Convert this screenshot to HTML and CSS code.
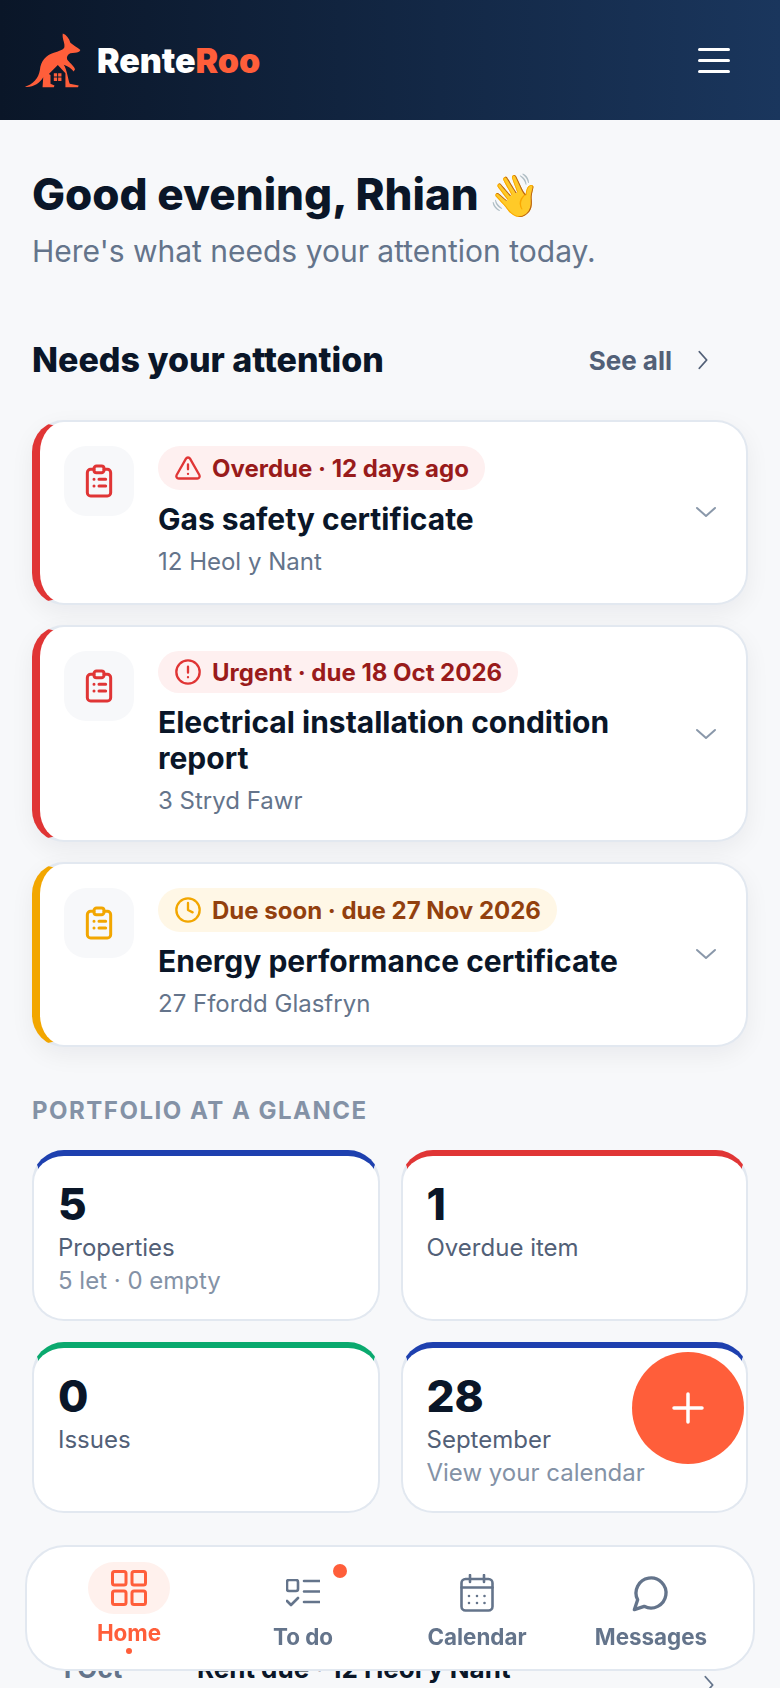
FILE: index.html
```html
<!DOCTYPE html>
<html lang="en">
<head>
    <meta charset="UTF-8">
    <meta name="viewport" content="width=device-width, initial-scale=1.0">
    <title>RenteRoo</title>
    <link rel="stylesheet" href="styles.css">
</head>
<body>

    <header class="topbar">
        <div class="brand">
            <svg class="brand-logo" viewBox="40 36 172 168" fill="#ff5e3a">
                <path d="M157 40C168 44 176 54 180 68L188 74C196 80 205 84 210 90C208 96 202 98 194 98L180 100C172 104 168 110 170 118C176 128 188 134 194 148L190 155C184 146 172 138 160 134C170 150 172 175 178 192L205 197L203 202L165 202L165 160L142 135L115 162L120 165L120 192L132 197L130 202L96 202L98 172C88 190 66 204 42 201C66 194 84 176 88 150C90 122 108 104 130 98C144 94 156 90 161 84C166 72 154 56 157 40Z"/>
                <path d="M130 160h10v10h-10zM143 160h10v10h-10zM130 173h10v10h-10zM143 173h10v10h-10z"/>
            </svg>
            <span class="brand-name">Rente<span class="brand-accent">Roo</span></span>
        </div>
        <div class="hamburger"><span></span><span></span><span></span></div>
    </header>

    <main class="page">
        <section class="greeting">
            <h1>Good evening, Rhian <span class="wave">👋</span></h1>
            <p>Here's what needs your attention today.</p>
        </section>

        <div class="section-head">
            <h2>Needs your attention</h2>
            <a class="see-all">See all
                <svg class="icon" width="24" height="24" viewBox="0 0 24 24"><path d="M8 3l8 9-8 9"/></svg>
            </a>
        </div>

        <div class="task-list">
            <article class="task task-red">
                <div class="task-icon">
                    <svg class="icon" width="40" height="40" viewBox="0 0 24 24"><path d="M9 5H7a2 2 0 0 0-2 2v12a2 2 0 0 0 2 2h10a2 2 0 0 0 2-2V7a2 2 0 0 0-2-2h-2"/><rect x="9" y="3" width="6" height="4" rx="1.5"/><path d="M9 11h.01M9 15h.01M12 11h4M12 15h4"/></svg>
                </div>
                <div class="task-body">
                    <span class="pill">
                        <svg class="icon" width="28" height="28" viewBox="0 0 24 24"><path d="M21.73 18l-8-14a2 2 0 0 0-3.46 0l-8 14A2 2 0 0 0 4 21h16a2 2 0 0 0 1.73-3Z"/><path d="M12 9v4M12 17h.01"/></svg>
                        Overdue · 12 days ago
                    </span>
                    <h3>Gas safety certificate</h3>
                    <p>12 Heol y Nant</p>
                </div>
                <svg class="icon task-chevron" width="24" height="24" viewBox="0 0 24 24"><path d="M3 8l9 8 9-8"/></svg>
            </article>

            <article class="task task-red task-long">
                <div class="task-icon">
                    <svg class="icon" width="40" height="40" viewBox="0 0 24 24"><path d="M9 5H7a2 2 0 0 0-2 2v12a2 2 0 0 0 2 2h10a2 2 0 0 0 2-2V7a2 2 0 0 0-2-2h-2"/><rect x="9" y="3" width="6" height="4" rx="1.5"/><path d="M9 11h.01M9 15h.01M12 11h4M12 15h4"/></svg>
                </div>
                <div class="task-body">
                    <span class="pill">
                        <svg class="icon" width="28" height="28" viewBox="0 0 24 24"><circle cx="12" cy="12" r="10"/><path d="M12 7.5v5M12 16.5h.01"/></svg>
                        Urgent · due 18 Oct 2026
                    </span>
                    <h3>Electrical installation condition report</h3>
                    <p>3 Stryd Fawr</p>
                </div>
                <svg class="icon task-chevron" width="24" height="24" viewBox="0 0 24 24"><path d="M3 8l9 8 9-8"/></svg>
            </article>

            <article class="task task-amber">
                <div class="task-icon">
                    <svg class="icon" width="40" height="40" viewBox="0 0 24 24"><path d="M9 5H7a2 2 0 0 0-2 2v12a2 2 0 0 0 2 2h10a2 2 0 0 0 2-2V7a2 2 0 0 0-2-2h-2"/><rect x="9" y="3" width="6" height="4" rx="1.5"/><path d="M9 11h.01M9 15h.01M12 11h4M12 15h4"/></svg>
                </div>
                <div class="task-body">
                    <span class="pill">
                        <svg class="icon" width="28" height="28" viewBox="0 0 24 24"><circle cx="12" cy="12" r="10"/><path d="M12 6v6l4 2"/></svg>
                        Due soon · due 27 Nov 2026
                    </span>
                    <h3>Energy performance certificate</h3>
                    <p>27 Ffordd Glasfryn</p>
                </div>
                <svg class="icon task-chevron" width="24" height="24" viewBox="0 0 24 24"><path d="M3 8l9 8 9-8"/></svg>
            </article>
        </div>

        <h4 class="label">PORTFOLIO AT A GLANCE</h4>
        <div class="stats">
            <div class="stat stat-blue">
                <strong>5</strong>
                <span class="stat-name">Properties</span>
                <span class="stat-note">5 let · 0 empty</span>
            </div>
            <div class="stat stat-red">
                <strong>1</strong>
                <span class="stat-name">Overdue item</span>
            </div>
            <div class="stat stat-green">
                <strong>0</strong>
                <span class="stat-name">Issues</span>
            </div>
            <div class="stat stat-blue">
                <strong>28</strong>
                <span class="stat-name">September</span>
                <span class="stat-note">View your calendar</span>
            </div>
        </div>

        <div class="upcoming">
            <span class="upcoming-date">1 Oct</span>
            <span class="upcoming-text">Rent due · 12 Heol y Nant</span>
            <svg class="icon" width="22" height="22" viewBox="0 0 24 24"><path d="M8 3l8 9-8 9"/></svg>
        </div>
    </main>

    <button class="fab">
        <svg class="icon" width="32" height="32" viewBox="0 0 32 32"><path d="M16 2v28M2 16h28"/></svg>
    </button>

    <nav class="tabbar">
        <a class="tab tab-active">
            <span class="tab-pill">
                <svg class="icon" width="36" height="36" viewBox="0 0 36 36"><rect x="1.5" y="1.5" width="13.5" height="13.5" rx="2"/><rect x="21" y="1.5" width="13.5" height="13.5" rx="2"/><rect x="1.5" y="21" width="13.5" height="13.5" rx="2"/><rect x="21" y="21" width="13.5" height="13.5" rx="2"/></svg>
            </span>
            <span class="tab-name">Home</span>
            <span class="tab-dot"></span>
        </a>
        <a class="tab">
            <span class="tab-icon">
                <svg class="icon" width="34" height="28" viewBox="0 0 34 28"><rect x="1" y="1" width="11" height="11" rx="2"/><path d="M18 2h16M18 12.5h16M18 23h16M1 22l4 4 7-7"/></svg>
                <span class="tab-badge"></span>
            </span>
            <span class="tab-name">To do</span>
        </a>
        <a class="tab">
            <span class="tab-icon">
                <svg class="icon" width="34" height="38" viewBox="0 0 34 38"><rect x="1.5" y="5" width="31" height="31.5" rx="4"/><path d="M10 1v7M24 1v7M1.5 13.5h31"/><path class="dots" d="M9 22h.01M17 22h.01M24.5 22h.01M9 29h.01M17 29h.01M24.5 29h.01"/></svg>
            </span>
            <span class="tab-name">Calendar</span>
        </a>
        <a class="tab">
            <span class="tab-icon">
                <svg class="icon" width="40" height="40" viewBox="0 0 24 24"><path d="M7.9 20A9 9 0 1 0 4 16.1L2 22Z"/></svg>
            </span>
            <span class="tab-name">Messages</span>
        </a>
    </nav>

</body>
</html>
```

FILE: styles.css
```css
* {
    box-sizing: border-box;
}

body {
    font-family: Inter, "Noto Sans", sans-serif;
    margin: 0;
    padding: 0;
    background-color: #f7f8fa;
    color: #0a1628;
}

h1, h2, h3, h4, p {
    margin: 0;
}

.icon {
    fill: none;
    stroke: currentColor;
    stroke-width: 2;
    stroke-linecap: round;
    stroke-linejoin: round;
    flex-shrink: 0;
}

/* Header */
.topbar {
    height: 120px;
    padding: 0 50px 0 24px;
    display: flex;
    align-items: center;
    justify-content: space-between;
    background: linear-gradient(90deg, #0a1628, #1a365d);
}

.brand {
    display: flex;
    align-items: center;
    gap: 16px;
}

.brand-logo {
    width: 57px;
    height: 56px;
}

.brand-name {
    font-size: 34px;
    font-weight: 900;
    letter-spacing: -0.1px;
    color: #fff;
}

.brand-accent {
    color: #ff5e3a;
}

.hamburger {
    width: 32px;
    display: flex;
    flex-direction: column;
    gap: 8px;
}

.hamburger span {
    height: 3px;
    border-radius: 2px;
    background-color: #fff;
}

/* Main column */
.page {
    padding: 44px 32px 0;
}

.greeting h1 {
    font-size: 44px;
    font-weight: 800;
    line-height: 60px;
}

.wave {
    font-size: 42px;
}

.greeting p {
    margin-top: 6px;
    font-size: 30px;
    line-height: 40px;
    color: #64748b;
}

.section-head {
    margin-top: 67px;
    padding-right: 34px;
    display: flex;
    align-items: center;
    justify-content: space-between;
}

.section-head h2 {
    font-size: 34px;
    line-height: 44px;
    font-weight: 800;
}

.see-all {
    display: flex;
    align-items: center;
    gap: 20px;
    font-size: 26px;
    font-weight: 700;
    color: #526077;
}

.see-all .icon {
    width: 22px;
    height: 22px;
}

/* Task cards */
.task-list {
    margin-top: 38px;
    display: flex;
    flex-direction: column;
    gap: 20px;
}

.task {
    padding: 24px 28px 25px 24px;
    display: flex;
    align-items: flex-start;
    gap: 24px;
    background-color: #fff;
    border: 2px solid #e2e8f0;
    border-left-width: 8px;
    border-radius: 32px;
    box-shadow: 0 8px 24px rgba(10, 22, 40, 0.06);
}

.task-red {
    border-left-color: #e03535;
}

.task-amber {
    border-left-color: #f2a600;
}

.task-icon {
    width: 70px;
    height: 70px;
    display: flex;
    align-items: center;
    justify-content: center;
    background-color: #f7f8fa;
    border-radius: 22px;
}

.task-icon .icon {
    stroke-width: 1.8;
}

.task-red .task-icon, .task-red .pill .icon {
    color: #e03535;
}

.task-amber .task-icon, .task-amber .pill .icon {
    color: #f2a600;
}

.task-body {
    flex: 1;
    min-width: 0;
}

.pill {
    height: 44px;
    padding: 0 16px;
    display: inline-flex;
    align-items: center;
    gap: 10px;
    border-radius: 22px;
    font-size: 24px;
    font-weight: 700;
}

.task-long {
    padding-bottom: 23px;
}

.task-long .pill {
    height: 42px;
}

.task-red .pill {
    background-color: #fef0f0;
    color: #991b1b;
}

.task-amber .pill {
    background-color: #fff7e6;
    color: #92400e;
}

.task h3 {
    margin-top: 11px;
    font-size: 30px;
    line-height: 36px;
    font-weight: 700;
}

.task p {
    margin-top: 9px;
    font-size: 24px;
    line-height: 32px;
    color: #64748b;
}

.task-chevron {
    align-self: center;
    color: #8a98aa;
}

/* Portfolio */
.label {
    margin-top: 49px;
    font-size: 24px;
    line-height: 30px;
    font-weight: 700;
    letter-spacing: 1.5px;
    color: #8492a6;
}

.stats {
    margin-top: 24px;
    display: grid;
    grid-template-columns: 1fr 1fr;
    gap: 21px;
}

.stat {
    height: 171px;
    padding: 24px 24px 0;
    display: flex;
    flex-direction: column;
    background-color: #fff;
    border: 2px solid #e2e8f0;
    border-top-width: 6px;
    border-radius: 32px;
}

.stat-blue {
    border-top-color: #1e40af;
}

.stat-red {
    border-top-color: #e03535;
}

.stat-green {
    border-top-color: #0aa96e;
}

.stat strong {
    font-size: 44px;
    line-height: 48px;
    font-weight: 800;
}

.stat-name {
    margin-top: 3px;
    font-size: 24px;
    line-height: 33px;
    color: #526077;
}

.stat-note {
    font-size: 24px;
    line-height: 33px;
    color: #8492a6;
}

/* Row that runs under the tab bar */
.upcoming {
    margin-top: 138px;
    padding-right: 28px;
    display: flex;
    align-items: flex-start;
    font-size: 26px;
    line-height: 36px;
    font-weight: 700;
}

.upcoming-date {
    width: 165px;
    padding-left: 28px;
    color: #64748b;
}

.upcoming-text {
    flex: 1;
}

.upcoming .icon {
    margin-top: 23px;
    color: #64748b;
}

.fab {
    position: fixed;
    left: 632px;
    top: 1352px;
    width: 112px;
    height: 112px;
    padding: 0;
    display: flex;
    align-items: center;
    justify-content: center;
    border: none;
    border-radius: 50%;
    background-color: #ff5e3a;
    color: #fff;
}

.fab .icon {
    stroke-width: 3.5;
}

/* Tab bar */
.tabbar {
    position: fixed;
    left: 25px;
    width: 730px;
    bottom: 17px;
    height: 126px;
    padding: 0 15px;
    display: grid;
    grid-template-columns: repeat(4, 1fr);
    background-color: #fff;
    border: 2px solid #e2e8f0;
    border-radius: 40px;
}

.tab {
    padding-top: 27px;
    display: flex;
    flex-direction: column;
    align-items: center;
    font-size: 22.4px;
    font-weight: 700;
    color: #64748b;
}

.tab-icon {
    position: relative;
    width: 40px;
    height: 38px;
    display: flex;
    align-items: center;
    justify-content: center;
}

.tab-badge {
    position: absolute;
    top: -10px;
    right: -24px;
    width: 14px;
    height: 14px;
    border-radius: 50%;
    background-color: #ff5e3a;
}

.tab-name {
    margin-top: 11px;
    line-height: 28px;
}

.tab .dots {
    stroke-width: 2.6;
}

.tab-active {
    padding-top: 15px;
    color: #ff5e3a;
}

.tab-active .tab-name {
    margin-top: 5px;
}

.tab-pill {
    width: 82px;
    height: 52px;
    display: flex;
    align-items: center;
    justify-content: center;
    border-radius: 26px;
    background-color: #fff1ed;
}

.tab-pill .icon {
    stroke-width: 3;
}

.tab-icon svg[viewBox="0 0 34 28"], .tab-icon svg[viewBox="0 0 34 38"] {
    stroke-width: 2.6;
}

.tab-dot {
    width: 6px;
    height: 6px;
    margin-top: 1px;
    border-radius: 50%;
    background-color: #ff5e3a;
}
```
